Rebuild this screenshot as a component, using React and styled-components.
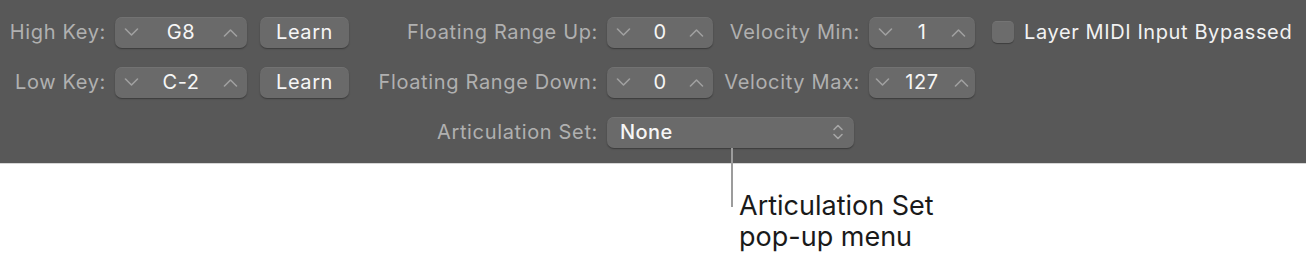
import React from "react";
import styled, { createGlobalStyle } from "styled-components";

const Global = createGlobalStyle`
  html, body { margin: 0; padding: 0; background: #ffffff; }
  body { font-family: Inter, "Liberation Sans", Arial, sans-serif; }
`;

const Page = styled.div`
  width: 1306px;
  height: 270px;
  background: #ffffff;
  overflow: hidden;
`;

const Panel = styled.div`
  box-sizing: border-box;
  height: 164px;
  background: #585858;
  border-bottom: 1px solid #d6d6d6;
  padding: 16px 0 0 11px;
  display: grid;
  grid-template-columns: 95px 132px 93px 240px 106px 138px 106px auto;
  grid-template-rows: 32px 32px 32px;
  column-gap: 9px;
  row-gap: 18px;
  align-items: center;
`;

const Label = styled.div`
  justify-self: end;
  color: #b0b0b0;
  font-size: 20px;
  white-space: nowrap;
  letter-spacing: 0.65px;
  grid-column: ${(p) => p.$col};
`;

const controlBase = `
  box-sizing: border-box;
  height: 31px;
  background: #6a6a6a;
  border-radius: 7px;
  box-shadow: 0 1px 1.5px rgba(0, 0, 0, 0.35), inset 0 0.5px 0 rgba(255, 255, 255, 0.12);
`;

const StepperBox = styled.div`
  ${controlBase}
  width: 100%;
  display: flex;
  align-items: center;
  justify-content: space-between;
  padding: 0 ${(p) => p.$pad}px;
`;

const StepValue = styled.span`
  color: #f6f6f6;
  font-size: 20px;
  font-weight: 400;
  letter-spacing: 0.6px;
`;

const LearnButton = styled.div`
  ${controlBase}
  width: 89px;
  justify-self: end;
  display: flex;
  align-items: center;
  justify-content: center;
  color: #f6f6f6;
  font-size: 20px;
  font-weight: 400;
  letter-spacing: 0.6px;
`;

const Popup = styled.div`
  ${controlBase}
  grid-column: 5 / span 3;
  width: 247px;
  display: flex;
  align-items: center;
  justify-content: space-between;
  padding: 0 10px 0 13px;
  color: #f6f6f6;
  font-size: 20px;
  font-weight: 500;
  letter-spacing: 0.4px;
`;

const CheckRow = styled.div`
  display: flex;
  align-items: center;
  gap: 10px;
  padding-left: 8px;
  color: #f2f2f2;
  font-size: 20px;
  font-weight: 400;
  letter-spacing: 0.6px;
  white-space: nowrap;
`;

const CheckBox = styled.div`
  width: 22px;
  height: 22px;
  border-radius: 5px;
  background: #6c6c6c;
  box-shadow: 0 1px 1px rgba(0, 0, 0, 0.3), inset 0 0.5px 0 rgba(255, 255, 255, 0.12);
`;

const Callout = styled.div`
  display: flex;
  align-items: flex-start;
  padding-left: 731px;
`;

const Leader = styled.div`
  position: relative;
  width: 2px;
  height: 59px;
  margin-top: -16px;
  background: #9c9c9c;
`;

const CalloutText = styled.div`
  margin-left: 6px;
  margin-top: 26px;
  color: #1a1a1a;
  font-size: 27px;
  line-height: 31px;
`;

const Chevron = ({ up }) => (
  <svg width="15" height="9" viewBox="0 0 15 9">
    <polyline
      points={up ? "1.5,8 7.5,2 13.5,8" : "1.5,1 7.5,7 13.5,1"}
      fill="none"
      stroke="#a0a0a0"
      strokeWidth="1.6"
      strokeLinecap="round"
      strokeLinejoin="round"
    />
  </svg>
);

const UpDown = () => (
  <svg width="12" height="20" viewBox="0 0 12 20">
    <polyline points="2,7.5 6,3.5 10,7.5" fill="none" stroke="#a6a6a6" strokeWidth="1.6" strokeLinecap="round" strokeLinejoin="round" />
    <polyline points="2,12.5 6,16.5 10,12.5" fill="none" stroke="#a6a6a6" strokeWidth="1.6" strokeLinecap="round" strokeLinejoin="round" />
  </svg>
);

const Stepper = ({ value, pad = 9 }) => (
  <StepperBox $pad={pad}>
    <Chevron />
    <StepValue>{value}</StepValue>
    <Chevron up />
  </StepperBox>
);

export default function App() {
  return (
    <Page>
      <Global />
      <Panel>
        <Label $col={1}>High Key:</Label>
        <Stepper value="G8" />
        <LearnButton>Learn</LearnButton>
        <Label $col={4}>Floating Range Up:</Label>
        <Stepper value="0" />
        <Label $col={6}>Velocity Min:</Label>
        <Stepper value="1" />
        <CheckRow>
          <CheckBox />
          Layer MIDI Input Bypassed
        </CheckRow>

        <Label $col={1}>Low Key:</Label>
        <Stepper value="C-2" />
        <LearnButton>Learn</LearnButton>
        <Label $col={4}>Floating Range Down:</Label>
        <Stepper value="0" />
        <Label $col={6}>Velocity Max:</Label>
        <Stepper value="127" pad={6} />

        <Label $col={4}>Articulation Set:</Label>
        <Popup>
          <span>None</span>
          <UpDown />
        </Popup>
      </Panel>
      <Callout>
        <Leader />
        <CalloutText>
          Articulation Set
          <br />
          pop-up menu
        </CalloutText>
      </Callout>
    </Page>
  );
}
